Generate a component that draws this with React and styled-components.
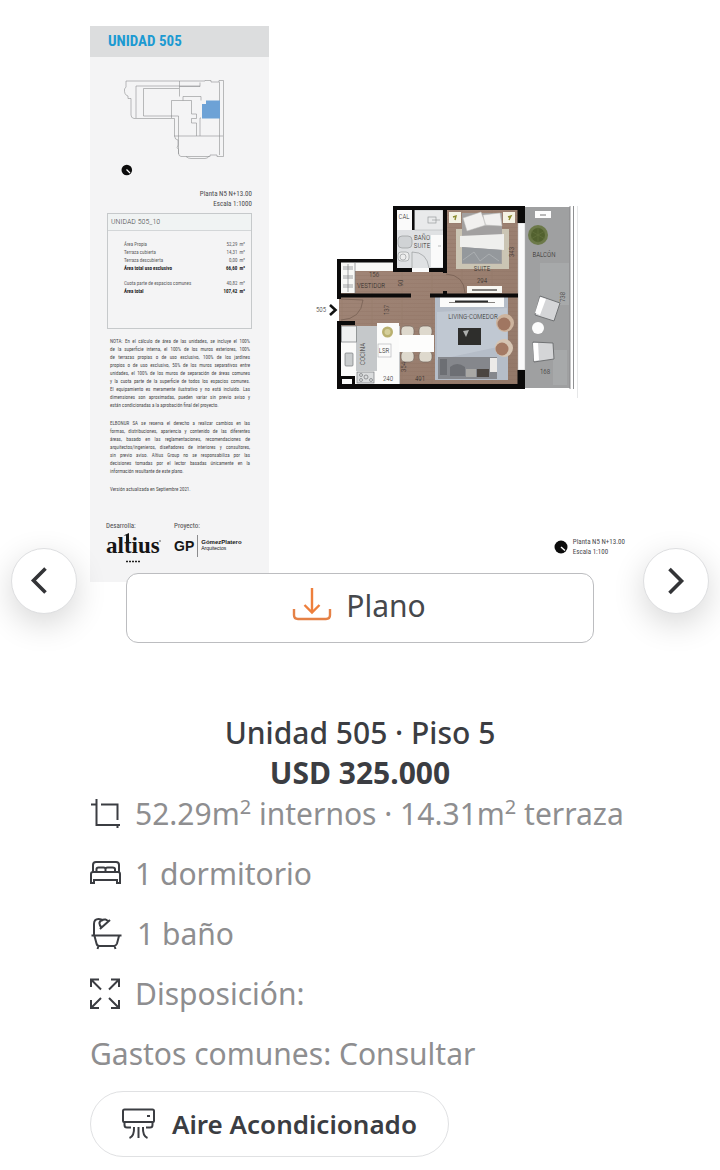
import React, { useState } from 'react';
import styled, { createGlobalStyle } from 'styled-components';

const GlobalStyle = createGlobalStyle`
  * {
    box-sizing: border-box;
  }
  body {
    margin: 0;
    background: #ffffff;
    color: #3b3d42;
    font-family: "Noto Sans", sans-serif;
  }
  h1, h2, p, ul, figure {
    margin: 0;
    padding: 0;
  }
  svg {
    display: block;
  }
`;

const narrow = '"Roboto Condensed", Roboto, sans-serif';

const areaRows = [
  { name: 'Área Propia', value: '52,29' },
  { name: 'Terraza cubierta', value: '14,31' },
  { name: 'Terraza descubierta', value: '0,00' },
  { name: 'Área total uso exclusivo', value: '66,60', total: true },
  { name: 'Cuota parte de espacios comunes', value: '40,82', spaced: true },
  { name: 'Área total', value: '107,42', total: true },
];

const notes = [
  [
    'NOTA: En el cálculo de área de las unidades, se incluye el 100%',
    'de la superficie interna, el 100% de los muros exteriores, 100%',
    'de terrazas propias o de uso exclusivo, 100% de los jardines',
    'propios o de uso exclusivo, 50% de los muros separativos entre',
    'unidades, el 100% de los muros de separación de áreas comunes',
    'y la cuota parte de la superficie de todos los espacios comunes.',
    'El equipamiento es meramente ilustrativo y no está incluido. Las',
    'dimensiones son aproximadas, pueden variar sin previo aviso y',
    'están condicionadas a la aprobación final del proyecto.',
  ],
  [
    'ELBONUR SA se reserva el derecho a realizar cambios en las',
    'formas, distribuciones, apariencia y contenido de las diferentes',
    'áreas, basado en las reglamentaciones, recomendaciones de',
    'arquitectos/ingenieros, diseñadores de interiores y consultores,',
    'sin previo aviso. Altius Group no se responsabiliza por las',
    'decisiones tomadas por el lector basadas únicamente en la',
    'información resultante de este plano.',
  ],
  ['Versión actualizada en Septiembre 2021.'],
];

function KeyPlan() {
  return (
    <svg viewBox="90 72 179 108" fill="none" stroke="#8d8f91" strokeWidth="0.600">
      <path d="M126 81H205V80.500H211V82H219V80.500H223.500V156.500H217V155H210V156.500H181Q178.500 156 178.500 153V149.500Q176 148 178 145V140Q175 140 174.500 136V118.500H134Q131 118 131 115V98.500H128V96Q124 95 124.500 89L126 87Z" />
      <path d="M179.500 81V96.500M179.500 86.500H200V82.500M136 86H200M136 86V118M143.500 88.500H179M143.500 88.500V116H172M171.500 118V100.500H191.500V114H196.500V118.500H191.500V123H196.500V136M183 96.500H201V100.500M183 96.500V100.500M178.500 116V154M171.500 116H178.500M174 136H223M219.500 82V155M201 118H200V136M186 156.500Q188 158.500 191 158.500H205Q208 158.500 209 156" />
      <path d="M202 104H206V100.500H220V118.500H202Z" fill="#6da2d6" stroke="none" />
      <circle cx="126.800" cy="170" r="5.300" fill="#0c0c0c" stroke="none" />
      <path d="M126.500 169.500L130 173" stroke="#fff" strokeWidth="1.200" />
    </svg>
  );
}

function FloorPlan() {
  return (
    <PlanDrawing viewBox="269 195 361 215" role="img" aria-label="Plano de la unidad 505">
      <defs>
        <linearGradient id="wood" x1="0" x2="1" y1="0" y2="1">
          <stop offset="0" stopColor="#a3887a" />
          <stop offset="1" stopColor="#937868" />
        </linearGradient>
        <pattern id="planks" width="30" height="4" patternUnits="userSpaceOnUse">
          <path d="M0 3.500H30M12 0V3.500" stroke="#87695a" strokeWidth="0.400" opacity="0.500" />
        </pattern>
      </defs>

      <path d="M339 262H395V208H523V387H339Z" fill="url(#wood)" />
      <path d="M339 262H395V208H523V387H339Z" fill="url(#planks)" />

      {/* baño */}
      <path d="M397 210H443V268H397Z" fill="#dfe1e3" />
      <path d="M397 210H412V230H397ZM431 235H443V267H431ZM412 268H429V272H412Z" fill="#fafafa" />
      <path d="M414.500 210H443V230H414.500Z" fill="#e9eaeb" stroke="#a9acae" strokeWidth="0.500" />
      <g fill="none" stroke="#8d9092" strokeWidth="0.600">
        <rect x="398" y="236" width="14" height="12" rx="4" fill="#d0d3d5" />
        <rect x="398" y="252" width="11" height="9" rx="3" fill="#eceded" />
        <circle cx="403" cy="257" r="3" />
        <rect x="428" y="217" width="8" height="6" />
        <path d="M432 220H440M438 246H441M412 268V252Q427 252 429 268" />
      </g>

      {/* vestidor */}
      <path d="M341 262H393V271H355V293H341Z" fill="#f8f8f6" />
      <g stroke="#7c8082" strokeWidth="0.700" fill="none">
        <path d="M348 264V292M343 267H353M343 269H353M343 276H353M343 278H353M343 285H353M343 287H353M355 263V293" />
      </g>

      {/* cocina */}
      <path d="M341 326H400V384H341Z" fill="#c5c8ca" />
      <path d="M341 326H356V384H341ZM377 323H399V384H377ZM356 371H377V384H356Z" fill="#fbfbfa" />
      <g stroke="#76797b" strokeWidth="0.700" fill="none">
        <rect x="341.500" y="326" width="15" height="16" fill="#eff0f0" />
        <rect x="345" y="353" width="8" height="13" rx="1" fill="#c9cccd" />
        <rect x="357" y="372" width="17" height="11" fill="#dadcdd" />
        <circle cx="361" cy="375" r="1.500" />
        <circle cx="361" cy="380" r="1.500" />
        <circle cx="366" cy="377" r="2" />
        <circle cx="371" cy="380" r="1.500" />
        <rect x="378" y="344" width="13" height="13" stroke="#b9bbbc" />
      </g>
      <circle cx="387.500" cy="332" r="5.500" fill="#b9b06f" />
      <circle cx="387.500" cy="332" r="3" fill="#d5cf9a" />

      {/* comedor */}
      <g fill="#ded9cd" stroke="#77695e" strokeWidth="0.700">
        <rect x="401" y="326" width="13" height="11" rx="4" />
        <rect x="419" y="326" width="13" height="11" rx="4" />
        <rect x="401" y="351" width="13" height="11" rx="4" />
        <rect x="419" y="351" width="13" height="11" rx="4" />
      </g>
      <path d="M399 335H434V352H399Z" fill="#fdfdfc" />

      {/* living */}
      <path d="M435 297H508V380H435Z" fill="#b5bdc8" />
      <path d="M437 312L507 308V345L437 360Z" fill="#c8cfd8" opacity="0.600" />
      <path d="M440 297H504V307H440Z" fill="#fbfbfa" />
      <path d="M455 301.500H488" stroke="#2b2b2b" strokeWidth="1.800" />
      <path d="M449 302.500H495" stroke="#55504c" strokeWidth="0.700" />
      <path d="M458 328H481V345H458Z" fill="#2e2e2c" />
      <path d="M463 331L469 330L466 337Z" fill="#aeb0ae" />
      <path d="M438 357H497V379H438Z" fill="#85878c" />
      <path d="M440 359H447V375H440ZM450 367Q457 361 465 367V376H450Z" fill="#6d6f74" />
      <path d="M466 369H476V377H466Z" fill="#a9a8a5" />
      <path d="M477 369H489V377H477Z" fill="#4b4540" />
      <path d="M490 358H497V372H490Z" fill="#eceae8" />
      <circle cx="505" cy="323" r="9" fill="#cdb49e" />
      <circle cx="504" cy="324" r="6.500" fill="#a07661" />
      <circle cx="504" cy="348" r="9" fill="#d6c5b3" />
      <circle cx="502" cy="349" r="6.500" fill="#a47a64" />

      {/* suite */}
      <path d="M456 229H509V269H456Z" fill="#cbc5b4" />
      <path d="M462 213H502V264H462Z" fill="#a2a0a0" />
      <path d="M460 236L504 234V250L460 247Z" fill="#efefed" />
      <path d="M462 247L501 250V263H462Z" fill="#94989c" />
      <path d="M463 260L474 252L480 261L489 254L499 261" stroke="#b4b7ba" strokeWidth="0.700" fill="none" />
      <path d="M463 218L481 212L486 225L467 231ZM483 215L500 213L502 226L485 225Z" fill="#f1f0ef" stroke="#bdbcba" strokeWidth="0.500" />
      <path d="M449 212H461V223H449ZM503 212H515V223H503Z" fill="#f4f2e4" />
      <path d="M453 217L456 216L455 220M508 217L511 216L509 220" stroke="#8c8b2e" strokeWidth="1.400" fill="none" />
      <path d="M467 286H502V293H467Z" fill="#f8f7f2" />
      <path d="M472 290H497" stroke="#34312f" strokeWidth="1.200" />
      <path d="M446 274Q464 275 465 293M341 320Q361 319 363 300M341 299L363 300" stroke="#6b5549" strokeWidth="0.600" fill="none" />

      {/* balcón */}
      <path d="M525 207H570V388H525Z" fill="#9fa0a1" />
      <path d="M540 263H569V305H540ZM553 350H567V385H553Z" fill="#adafb0" opacity="0.600" />
      <path d="M535 211H551V218H535Z" fill="#fdfdfd" />
      <path d="M540 215H546" stroke="#777" strokeWidth="1" />
      <circle cx="538" cy="235" r="10" fill="#66743f" opacity="0.900" />
      <circle cx="538" cy="235" r="7" fill="#52612f" />
      <path d="M531 231L545 239M545 231L531 239M538 227V243" stroke="#66743f" strokeWidth="0.700" />
      <path d="M540 296L560 303L554 321L535 315Z" fill="#d4d5d7" stroke="#707274" strokeWidth="1" />
      <path d="M540 297L546 299L540 315L535 313Z" fill="#fff" />
      <path d="M533 342L553 343L554 359L534 362Z" fill="#d4d5d7" stroke="#707274" strokeWidth="1" />
      <path d="M533 343L538 343L539 360L534 361Z" fill="#fff" />
      <circle cx="538" cy="328" r="6" fill="#fcfcfc" />
      <path d="M570 206V389M573.500 206V389" stroke="#838587" strokeWidth="0.900" />
      <path d="M577.500 206V398" stroke="#e6e7e8" strokeWidth="1" />

      {/* muros */}
      <path d="M518 223H525V370H518Z" fill="#fafafa" stroke="#b4b5b6" strokeWidth="0.500" />
      <g fill="#0b0a0a">
        <path d="M393 206H525V223H517.500V210H447V273H443V210H414.500V230H412V210H397V268H412V272H393Z" />
        <path d="M337 259H397V262.500H341V293.500H411V297.500H341V299H337ZM429 268H444V272H429ZM430 293.500H518V297.500H430ZM443 291H447V294H443Z" />
        <path d="M337 321H355V325H341V376H355V384H517.500V370H525V389H337ZM342 379V384H352V379Z" fillRule="evenodd" />
      </g>
      <path d="M330 305L335.500 310L330 315" stroke="#111" strokeWidth="2.600" fill="none" />

      <g fontFamily='"Roboto Condensed", Roboto, sans-serif' fontSize="7" fontWeight="300" fill="#2e2b29" textAnchor="middle">
        <text x="321" y="312">505</text>
        <text x="404" y="219">CAL</text>
        <text x="422" y="240">BAÑO</text>
        <text x="422" y="248">SUITE</text>
        <text x="374" y="277">156</text>
        <text x="371" y="288">VESTIDOR</text>
        <text transform="translate(403 283) rotate(-90)">90</text>
        <text transform="translate(389 310) rotate(-90)">137</text>
        <text transform="translate(365 354) rotate(-90)">COCINA</text>
        <text x="384" y="353">LSR</text>
        <text x="388" y="381">240</text>
        <text transform="translate(406 367) rotate(-90)">354</text>
        <text x="420" y="381">491</text>
        <text x="482" y="271">SUITE</text>
        <text x="482" y="283">294</text>
        <text transform="translate(514 252) rotate(-90)">343</text>
        <text x="473" y="319">LIVING-COMEDOR</text>
        <text x="544" y="257">BALCÓN</text>
        <text transform="translate(565 297) rotate(-90)">738</text>
        <text x="545" y="374">168</text>
      </g>
    </PlanDrawing>
  );
}

function Chevron({ flip }) {
  return (
    <svg width="32" height="32" viewBox="0 0 32 32" fill="none" stroke="#333437" strokeWidth="3.600">
      <path d={flip ? 'M9.500 4L21.500 16L9.500 28' : 'M17.500 3.500L5.500 15.500L17.500 27.500'} />
    </svg>
  );
}

function AltiusLogo() {
  return (
    <svg width="56" height="34" viewBox="0 0 56 34">
      <text x="0" y="20" fontFamily='"Liberation Serif", serif' fontWeight="700" fontSize="23" fill="#151515">altius</text>
      <path d="M17.500 2.500L23 0V10H20V2.500Z" fill="#151515" />
      <path d="M20 28.500H34" stroke="#222" strokeWidth="1.400" strokeDasharray="2 1" />
      <circle cx="54" cy="8" r="0.800" fill="#444" />
    </svg>
  );
}

function DownloadIcon() {
  return (
    <svg width="40" height="36" viewBox="0 0 40 36" fill="none" stroke="#ee7f3c" strokeWidth="2.400">
      <path d="M20 1V25M12.500 18L20 25.500L27.500 18" />
      <path d="M2 22V28Q2 32 6 32H34Q38 32 38 28V22" stroke="#e58146" />
    </svg>
  );
}

function CropIcon() {
  return (
    <Icon viewBox="0 0 32 32">
      <path d="M6.500 1V27H30M1 6.500H7M11 6.500H27.500V22M27.500 27V30" />
    </Icon>
  );
}

function BedIcon() {
  return (
    <Icon viewBox="0 0 32 32">
      <path d="M3 14V7Q3 4 6 4H26Q29 4 29 7V14M1 25V16Q1 14 3 14H28Q30 14 30 16V25H27V22H4V25Z" />
      <path d="M6.500 14V11Q6.500 9.500 8.500 9.500H13.500Q15.500 9.500 15.500 11V14M15.500 11Q15.500 9.500 17.500 9.500H22.500Q25 9.500 25 11V14" />
    </Icon>
  );
}

function BathIcon() {
  return (
    <Icon $wide viewBox="0 0 34 32">
      <path d="M1.500 17.500H31.500M4 17V6Q4 1 8.500 1Q11.500 1 13 3M10 11L11.500 9.500Q9 6.500 9.500 4.500Q11 1 15.500 1.500L19 3.500M11 10L20 2M4.500 18L6.500 25.500Q7 28 9.500 28H23.500Q26 28 27 25.500L29 18M8.500 28L7.500 31M24.500 28L25.500 31" />
    </Icon>
  );
}

function ExpandIcon() {
  return (
    <Icon viewBox="0 0 32 32">
      <path d="M1 9V1.500H9M1 1.500L11 11.500M21 1.500H29V9M29 1.500L19 11.500M1 22V30H9M1 30L11 20M29 22V30H21M29 30L19 20" />
    </Icon>
  );
}

function AirIcon() {
  return (
    <svg width="34" height="32" viewBox="0 0 34 32" fill="none" stroke="#3b3d42" strokeWidth="2">
      <path d="M5 14H2Q1 14 1 13V3Q1 1.500 2.500 1.500H30.500Q32 1.500 32 3V13Q32 14 31 14ZM5 14H31M25 8H28" />
      <path d="M2.500 14V17Q2.500 19.500 5 19.500H9M30.500 14V17Q30.500 19.500 28 19.500H24M12 19Q12.500 28 7.500 30M16.500 19V30M21 19Q20.500 28 25.500 30" />
    </svg>
  );
}

const details = [
  { icon: <CropIcon />, text: <>52.29m<sup>2</sup> internos · 14.31m<sup>2</sup> terraza</> },
  { icon: <BedIcon />, text: '1 dormitorio' },
  { icon: <BathIcon />, text: '1 baño' },
  { icon: <ExpandIcon />, text: 'Disposición:' },
  { text: 'Gastos comunes: Consultar' },
];

export default function App() {
  const [, setSlide] = useState(0);

  return (
    <Page>
      <GlobalStyle />
      <Carousel>
        <Slide>
          <Sheet>
            <SheetTitle>UNIDAD 505</SheetTitle>
            <KeyPlanBox><KeyPlan /></KeyPlanBox>
            <Scale>Planta N5 N+13.00<br />Escala 1:1000</Scale>
            <AreaBox>
              <AreaTitle>UNIDAD 505_10</AreaTitle>
              <AreaTable>
                <tbody>
                  {areaRows.map((row) => (
                    <AreaRow key={row.name} $total={row.total} $spaced={row.spaced}>
                      <th scope="row">{row.name}</th>
                      <td>{row.value}</td>
                      <td>m²</td>
                    </AreaRow>
                  ))}
                </tbody>
              </AreaTable>
            </AreaBox>
            <Notes>
              {notes.map((lines) => (
                <p key={lines[0]}>
                  {lines.map((line, i) => (
                    <NoteLine key={line} $last={i === lines.length - 1}>{line}</NoteLine>
                  ))}
                </p>
              ))}
            </Notes>
            <Credits>
              <Credit>
                Desarrolla:
                <AltiusLogo />
              </Credit>
              <Credit>
                Proyecto:
                <Studio>
                  <strong>GP</strong>
                  <StudioName><b>GómezPlatero</b>Arquitectos</StudioName>
                </Studio>
              </Credit>
            </Credits>
          </Sheet>
          <PlanColumn>
            <FloorPlan />
            <PlanCaption>
              <svg width="14" height="14" viewBox="0 0 14 14">
                <circle cx="7" cy="7" r="6.500" fill="#0c0c0c" />
                <path d="M7 7L11 10.500" stroke="#fff" strokeWidth="1.400" />
              </svg>
              <span>Planta N5 N+13.00<br />Escala 1:100</span>
            </PlanCaption>
          </PlanColumn>
        </Slide>
        <ArrowButton $side="left" aria-label="Anterior" onClick={() => setSlide((s) => s - 1)}>
          <Chevron />
        </ArrowButton>
        <ArrowButton $side="right" aria-label="Siguiente" onClick={() => setSlide((s) => s + 1)}>
          <Chevron flip />
        </ArrowButton>
        <PlanButton>
          <DownloadIcon />
          Plano
        </PlanButton>
      </Carousel>

      <Info>
        <Title>Unidad 505 · Piso 5</Title>
        <Price>USD 325.000</Price>
        <Details>
          {details.map((item, i) => (
            <Detail key={i}>
              {item.icon}
              <span>{item.text}</span>
            </Detail>
          ))}
        </Details>
        <Amenity>
          <AirIcon />
          Aire Acondicionado
        </Amenity>
      </Info>
    </Page>
  );
}

const Page = styled.main`
  padding-bottom: 13px;
`;

const Carousel = styled.section`
  position: relative;
  padding: 26px 90px 0;
`;

const Slide = styled.div`
  display: grid;
  grid-template-columns: minmax(0, 179fr) minmax(0, 361fr);
  font-family: ${narrow};
  color: #4a4a4c;
`;

const Sheet = styled.aside`
  height: 556px;
  background: #f4f4f5;
`;

const SheetTitle = styled.h2`
  padding-left: 18px;
  background: #dcddde;
  color: #1c9ad2;
  font-size: 15px;
  line-height: 31px;
`;

const KeyPlanBox = styled.div`
  padding-top: 15px;
`;

const Scale = styled.p`
  padding: 9px 17px 4px 0;
  text-align: right;
  font-size: 7px;
  line-height: 10px;
`;

const AreaBox = styled.div`
  height: 116px;
  margin: 0 17px;
  border: 1px solid #c6c9cb;
`;

const AreaTitle = styled.div`
  padding-left: 3px;
  border-bottom: 1px solid #d3d6d8;
  background: #f0f3f3;
  font-size: 8px;
  font-weight: 300;
  line-height: 16px;
`;

const AreaTable = styled.table`
  width: 100%;
  padding: 9px 6px 0 16px;
  border-spacing: 0;
  font-size: 5px;
  line-height: 8px;
`;

const AreaRow = styled.tr`
  th, td {
    padding: ${({ $spaced }) => ($spaced ? '7px 0 0' : '0')};
    font-weight: ${({ $total }) => ($total ? 700 : 400)};
    color: ${({ $total }) => ($total ? '#1c1c1e' : '#5d5d60')};
    text-align: right;
    white-space: nowrap;
  }
  th {
    text-align: left;
  }
`;

const Notes = styled.div`
  display: flex;
  flex-direction: column;
  gap: 10px;
  padding: 8px 19px 0 20px;
  font-size: 5px;
  line-height: 8px;
`;

const NoteLine = styled.span`
  display: block;
  white-space: nowrap;
  text-align-last: ${({ $last }) => ($last ? 'left' : 'justify')};
`;

const Credits = styled.div`
  display: flex;
  padding: 28px 16px 0;
  gap: 12px;
  font-size: 7px;
  line-height: 10px;
`;

const Credit = styled.div`
  display: flex;
  flex-direction: column;
  gap: 2px;
`;

const Studio = styled.div`
  display: flex;
  align-items: center;
  gap: 3px;
  padding-top: 2px;
  color: #161616;
  font-family: "Liberation Sans", sans-serif;
  strong {
    font-size: 14px;
  }
`;

const StudioName = styled.div`
  display: flex;
  flex-direction: column;
  padding: 4px 0 6px 3px;
  border-left: 1px solid #8b8b8d;
  font-size: 5px;
  line-height: 6px;
  b {
    font-size: 6px;
  }
`;

const PlanColumn = styled.figure`
  display: flex;
  flex-direction: column;
  justify-content: space-between;
  padding: 169px 0 25px;
`;

const PlanDrawing = styled.svg`
  width: 100%;
`;

const PlanCaption = styled.figcaption`
  display: flex;
  align-items: center;
  justify-content: flex-end;
  gap: 5px;
  padding-right: 5px;
  font-size: 7px;
  line-height: 10px;
`;

const ArrowButton = styled.button`
  position: absolute;
  top: 548px;
  ${({ $side }) => $side}: 11px;
  display: flex;
  align-items: center;
  justify-content: center;
  width: 66px;
  height: 66px;
  padding: 0;
  border: 1px solid #dedfe1;
  border-radius: 50%;
  background: #ffffff;
  box-shadow: 0 10px 32px rgba(0, 0, 0, 0.16);
  cursor: pointer;
`;

const PlanButton = styled.button`
  position: relative;
  display: flex;
  align-items: center;
  justify-content: center;
  gap: 14px;
  width: calc(100% - 72px);
  height: 70px;
  margin: -9px 36px 0;
  padding: 0 2px 6px 0;
  border: 1px solid #bcbdc0;
  border-radius: 12px;
  background: #ffffff;
  color: #46484c;
  font-family: inherit;
  font-size: 30px;
  cursor: pointer;
`;

const Info = styled.section`
  padding: 70px 90px 0;
`;

const Title = styled.h1`
  font-size: 30px;
  font-weight: 500;
  line-height: 40px;
  text-align: center;
`;

const Price = styled.p`
  font-size: 30px;
  font-weight: 700;
  line-height: 40px;
  text-align: center;
`;

const Details = styled.ul`
  display: flex;
  flex-direction: column;
  gap: 20px;
  padding-top: 1px;
  list-style: none;
`;

const Detail = styled.li`
  display: flex;
  align-items: center;
  gap: 13px;
  color: #8e8e90;
  font-size: 30px;
  line-height: 40px;
  white-space: nowrap;
  sup {
    font-size: 20px;
    line-height: 0;
  }
`;

const Icon = styled.svg`
  flex: none;
  width: ${({ $wide }) => ($wide ? '34px' : '32px')};
  height: 32px;
  fill: none;
  stroke: #3b3d42;
  stroke-width: 2;
`;

const Amenity = styled.div`
  display: inline-flex;
  align-items: center;
  gap: 16px;
  height: 66px;
  margin-top: 17px;
  padding: 0 31px;
  border: 1px solid #e0e1e3;
  border-radius: 33px;
  font-size: 26px;
  font-weight: 600;
`;
